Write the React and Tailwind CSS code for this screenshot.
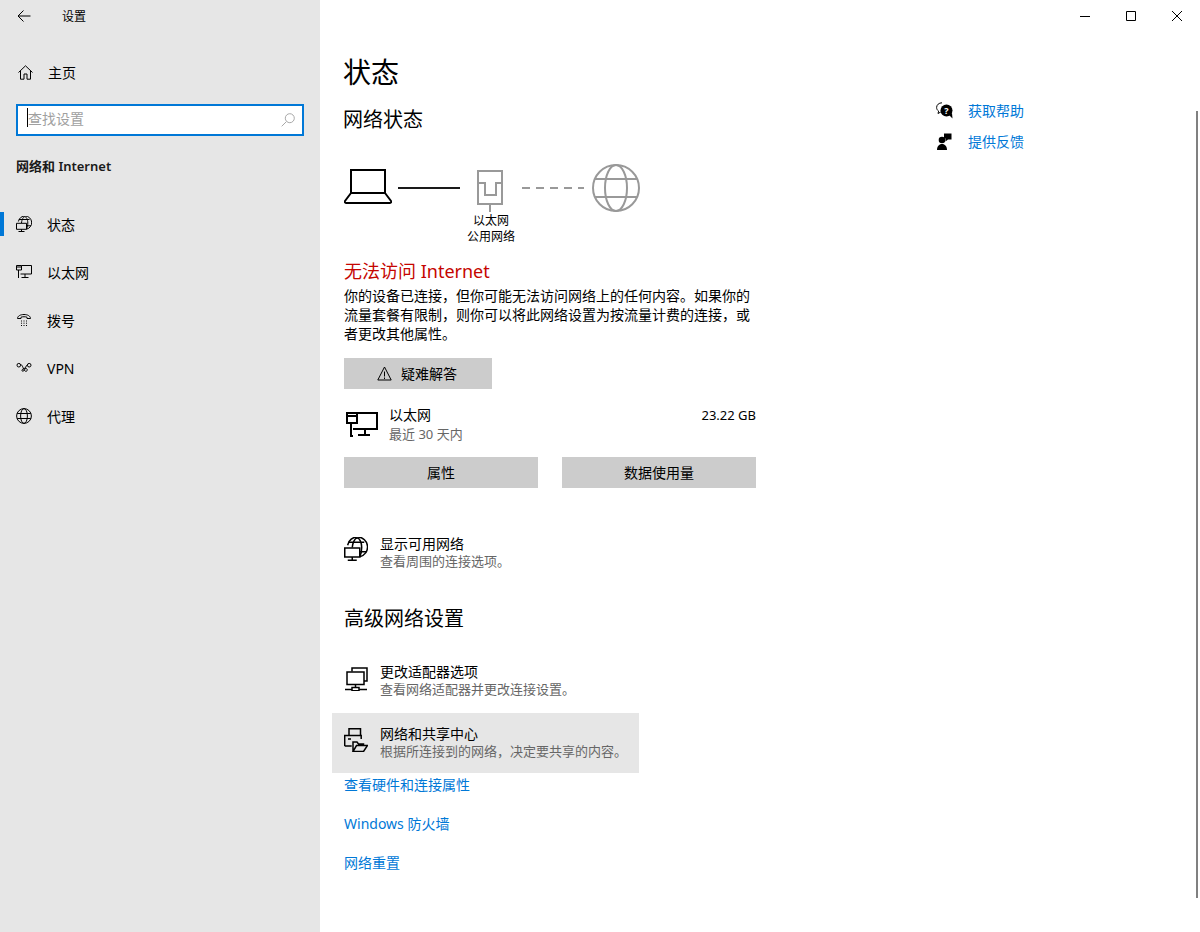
const font = { fontFamily: '"Noto Sans", "Noto Sans CJK SC", sans-serif' };

function Icon({ size = 24, box = 24, sw = 1, className = "", children }) {
  return (
    <svg
      width={size}
      height={size}
      viewBox={`0 0 ${box} ${box}`}
      fill="none"
      stroke="currentColor"
      strokeWidth={sw}
      className={className}
    >
      {children}
    </svg>
  );
}

const GlobeMonitor = ({ size = 16, className = "" }) => (
  <Icon size={size} box={16} className={className}>
    <path d="M2.4 5.5A6.7 6.7 0 1 1 10.5 13.2" />
    <path d="M5.5 7C5.8 3.5 7.3.7 8.8.7s3 2.800 3 6.300c0 2.300-.5 4.500-1.300 6" />
    <path d="M3 3.5h10.500M10.500 9.800H15" />
    <path d="M.5 7.3h10v6H.5zM5.500 13.300v2M2.500 15.500h6" />
  </Icon>
);

const EthernetPc = () => (
  <Icon size={16} box={16}>
    <path d="M5.5 1.500h10v8.500H4.500M2.500 6v8" />
    <path d="M.5 1.500h5V6h-5zM.5 3h5M9 10v3.500M5.500 13.500h7" />
  </Icon>
);

const navItems = [
  { label: "状态", active: true, icon: <GlobeMonitor /> },
  { label: "以太网", icon: <EthernetPc /> },
  {
    label: "拨号",
    icon: (
      <Icon size={16} box={16}>
        <path d="M1.500 6.500C1.500 4 4.500 2.500 8 2.500s6.500 1.500 6.500 4H11V5.200C10 4.600 6 4.600 5 5.200v1.300z" />
        <path d="M5 9h1M7.500 9h1M10 9h1M5 11.200h1M7.500 11.200h1M10 11.200h1M5 13.500h1M7.500 13.500h1M10 13.500h1" />
      </Icon>
    ),
  },
  {
    label: "VPN",
    icon: (
      <Icon size={16} box={16}>
        <circle cx="2.8" cy="5.2" r="1.8" />
        <circle cx="13.2" cy="5.2" r="1.8" />
        <path d="M4.500 4.500c2 0 2.500 4 4 6 1 1.400 3 .8 2.800-.8C11 8 8 7.500 6.500 9.300c-1.300 1.600 0 2.600 1.400 1.400 1.600-1.500 2-5.600 3.600-6.200" />
      </Icon>
    ),
  },
  {
    label: "代理",
    icon: (
      <Icon size={16} box={16}>
        <circle cx="8" cy="8" r="7.4" />
        <ellipse cx="8" cy="8" rx="3.4" ry="7.4" />
        <path d="M1.200 5.500h13.600M1.200 10.500h13.600" />
      </Icon>
    ),
  },
];

function NavItem({ item }) {
  return (
    <div className="relative flex h-[48px] items-center pl-4 text-[14px] text-black">
      {item.active && (
        <div className="absolute left-0 top-[12px] h-[24px] w-[4px] bg-[#0078d7]" />
      )}
      <span className="flex w-[31px] items-center">{item.icon}</span>
      <span>{item.label}</span>
    </div>
  );
}

function Sidebar() {
  return (
    <div className="h-[932px] w-[320px] shrink-0 bg-[#e6e6e6]">
      <div className="flex h-[32px] items-center">
        <span className="flex w-[62px] pl-[17px] text-black">
          <Icon size={14} box={14}>
            <path d="M13.500 7H1M6.500 1.500 1 7l5.500 5.500" />
          </Icon>
        </span>
        <span className="mt-[2px] text-[12px] text-black">设置</span>
      </div>
      <div className="mt-[16px] flex h-[48px] items-center pl-[18px] text-[14px] text-black">
        <span className="flex w-[30px]">
          <Icon size={15} box={15}>
            <path d="M.5 7.500 7.500.8l7 6.700M2.500 6v8.200H6V9h3v5.200h3.500V6" />
          </Icon>
        </span>
        主页
      </div>
      <div className="mx-4 mt-[8px] flex h-[32px] items-center justify-between border-2 border-[#0078d7] bg-white pl-[10px] pr-[7px]">
        <div className="relative flex items-center pb-[3px] text-[14px] text-[#a0a0a0]">
          <span className="absolute -left-px top-0 h-[19px] w-px bg-black" />
          查找设置
        </div>
        <span className="text-[#a8a8a8]">
          <Icon size={14} box={14}>
            <circle cx="8.8" cy="5.2" r="4.5" />
            <path d="M5.500 8.500.7 13.300" />
          </Icon>
        </span>
      </div>
      <div className="mt-[20px] pl-4 text-[13px] font-semibold leading-[20px] text-[#1a1a1a]">
        网络和 Internet
      </div>
      <div className="mt-[24px]">
        {navItems.map((item) => (
          <NavItem key={item.label} item={item} />
        ))}
      </div>
    </div>
  );
}

function LinkRow({ icon, title, sub, hover }) {
  return (
    <div
      className={`-ml-3 flex h-[60px] w-[307px] items-center pl-3 ${
        hover ? "bg-[#e6e6e6]" : ""
      }`}
    >
      <span className="flex w-[36px] shrink-0 text-black">{icon}</span>
      <div className="whitespace-nowrap pb-px">
        <div className="text-[14px] leading-[18px] text-black">{title}</div>
        <div className="-mt-px text-[13px] leading-[18px] text-[#666]">{sub}</div>
      </div>
    </div>
  );
}

function GreyButton({ className = "", children }) {
  return (
    <button
      className={`flex h-[31px] items-center justify-center bg-[#cccccc] text-[14px] text-black ${className}`}
    >
      {children}
    </button>
  );
}

function Diagram() {
  return (
    <div className="mt-[30px] flex items-start">
      <svg width="48" height="48" viewBox="0 0 48 48" fill="none" stroke="#000" strokeWidth="2">
        <path d="M7 6h34v23H7zM7 29 1 37c-.6 1 0 2 1 2h44c1 0 1.600-1 1-2l-6-8" />
      </svg>
      <div className="ml-[6px] mt-[23px] h-[2px] w-[62px] bg-[#1a1a1a]" />
      <div className="ml-px flex w-[60px] flex-col items-center">
        <svg width="28" height="48" viewBox="0 0 28 48" fill="none" stroke="#999" strokeWidth="2">
          <path d="M1 7h24v33H1zM1 19h7v12h11V19h6M13 40v8" />
        </svg>
        <div className="mt-px text-[12px] leading-[16px] text-black">以太网</div>
        <div className="text-[12px] leading-[16px] text-black">公用网络</div>
      </div>
      <svg width="62" height="48" viewBox="0 0 62 48" className="ml-px" stroke="#999" strokeWidth="2">
        <path d="M0 24h62" strokeDasharray="8 6" />
      </svg>
      <svg width="48" height="48" viewBox="0 0 48 48" fill="none" stroke="#999" strokeWidth="2" className="ml-[8px]">
        <circle cx="24" cy="24" r="23" />
        <ellipse cx="24" cy="24" rx="11" ry="23" />
        <path d="M3 15h42M3 33h42" />
      </svg>
    </div>
  );
}

function MainColumn() {
  return (
    <div className="w-[412px] shrink-0">
      <h1 className="-ml-px text-[28px] leading-[40px] text-black">状态</h1>
      <h2 className="-ml-px mt-[14px] text-[20px] leading-[28px] text-black">网络状态</h2>
      <Diagram />
      <div className="mt-[14px] text-[18px] leading-[24px] text-[#c50500]">无法访问 Internet</div>
      <p className="mt-[3px] text-[14px] leading-[19px] text-black">
        你的设备已连接，但你可能无法访问网络上的任何内容。如果你的流量套餐有限制，则你可以将此网络设置为按流量计费的连接，或者更改其他属性。
      </p>
      <GreyButton className="mt-[15px] w-[148px] gap-[9px] pr-[2px]">
        <Icon size={15} box={15}>
          <path d="M7.500 1 .8 14h13.400zM7.500 5.500v5M7.500 11.500V13" />
        </Icon>
        疑难解答
      </GreyButton>
      <div className="mt-[16px] flex h-[40px]">
        <span className="ml-[2px] flex w-[43px] items-center text-black">
          <svg width="32" height="32" viewBox="0 0 32 32" fill="none" stroke="#000" strokeWidth="2">
            <path d="M11 4h20v16H7M5 14v13h2" />
            <path d="M1 4h10v10H1zM1 7h10M19 20v6M12 26h12" />
          </svg>
        </span>
        <div className="flex-1">
          <div className="flex justify-between text-[14px] leading-[20px] text-black">
            <span>以太网</span>
            <span className="text-[13px]">23.22 GB</span>
          </div>
          <div className="-mt-px text-[13px] leading-[20px] text-[#666]">最近 30 天内</div>
        </div>
      </div>
      <div className="mt-[12px] flex gap-[24px]">
        <GreyButton className="w-[194px]">属性</GreyButton>
        <GreyButton className="w-[194px]">数据使用量</GreyButton>
      </div>
      <div className="mt-[35px]">
        <LinkRow
          icon={<GlobeMonitor size={24} className="mb-[8px]" />}
          title="显示可用网络"
          sub="查看周围的连接选项。"
        />
      </div>
      <h2 className="mt-[22px] text-[20px] leading-[28px] text-black">高级网络设置</h2>
      <div className="mt-[18px]">
        <LinkRow
          title="更改适配器选项"
          sub="查看网络适配器并更改连接设置。"
          icon={
            <Icon size={24} box={24} sw={1.5} className="mb-[5px]">
              <path d="M8 4.500V1h15v13h-3" />
              <path d="M3 5h17v12.500H3zM11.500 17.500v3M1 22.500h7M15 22.500h8M8 20.500h7v3.300H8z" />
            </Icon>
          }
        />
      </div>
      <div className="mt-[2px]">
        <LinkRow
          hover
          title="网络和共享中心"
          sub="根据所连接到的网络，决定要共享的内容。"
          icon={
            <Icon size={24} box={24} sw={1.5} className="mb-[6px]">
              <path d="M5 7.500V.7h11.500v6.800M.7 18V7.500h16.500V11M.7 18h7M4 11h3" />
              <path d="M9 23.500V14h4l1.500 2h5v2M9 23.500h10.500l4-6H12.500z" />
            </Icon>
          }
        />
      </div>
      <div className="mt-[2px] flex flex-col gap-[19px] text-[14px] leading-[20px] text-[#0078d7]">
        <span>查看硬件和连接属性</span>
        <span>Windows 防火墙</span>
        <span>网络重置</span>
      </div>
    </div>
  );
}

function HelpLinks() {
  const rows = [
    {
      label: "获取帮助",
      icon: (
        <svg width="18" height="18" viewBox="0 0 18 18">
          <path d="M6 .8C2.900.8.600 2.900.600 5.500c0 1.500.8 2.800 2 3.600L2 11.500l2.800-1.500" fill="none" stroke="#000" />
          <circle cx="10.5" cy="8.5" r="6" fill="#000" />
          <path d="m13 13 3.500 3.500L16 11z" fill="#000" />
          <text x="10.5" y="11.5" textAnchor="middle" fontSize="9" fontWeight="700" fill="#fff">?</text>
        </svg>
      ),
    },
    {
      label: "提供反馈",
      icon: (
        <svg width="18" height="18" viewBox="0 0 18 18" fill="#000">
          <circle cx="6" cy="7" r="3.3" />
          <path d="M1 17c0-3.500 2-6 5-6s5 2.500 5 6z" />
          <path d="M8 .5h7.500v6H12L9.500 8.500v-3H8z" />
        </svg>
      ),
    },
  ];
  return (
    <div className="ml-[180px] mt-[43px] w-[200px]">
      {rows.map((row) => (
        <div key={row.label} className="flex h-[31px] items-center">
          <span className="flex w-[32px]">{row.icon}</span>
          <span className="text-[14px] text-[#0078d7]">{row.label}</span>
        </div>
      ))}
    </div>
  );
}

function WindowControls() {
  return (
    <div className="flex h-[32px] justify-end text-black">
      <span className="flex w-[46px] items-center justify-center">
        <Icon size={10} box={10}>
          <path d="M0 5.500h10" />
        </Icon>
      </span>
      <span className="flex w-[46px] items-center justify-center">
        <Icon size={10} box={10}>
          <path d="M.5.500h9v9h-9z" />
        </Icon>
      </span>
      <span className="flex w-[46px] items-center justify-center">
        <Icon size={10} box={10}>
          <path d="M0 0l10 10M10 0 0 10" />
        </Icon>
      </span>
    </div>
  );
}

export default function App() {
  return (
    <div className="flex h-[932px] w-[1200px] overflow-hidden bg-white" style={font}>
      <Sidebar />
      <div className="relative flex-1">
        <WindowControls />
        <div className="flex pl-[24px] pt-[20px]">
          <MainColumn />
          <HelpLinks />
        </div>
        <div className="absolute right-[2px] top-[111px] h-[787px] w-[2px] bg-[#808080]" />
      </div>
    </div>
  );
}
